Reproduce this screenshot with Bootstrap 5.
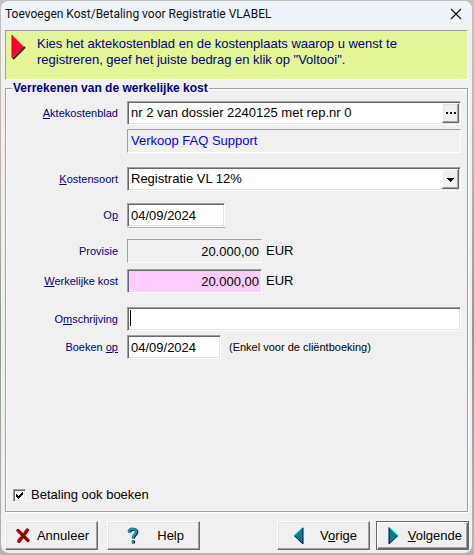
<!DOCTYPE html>
<html lang="nl">
<head>
<meta charset="utf-8">
<meta name="viewport" content="width=device-width, initial-scale=1">
<title>Toevoegen Kost/Betaling voor Registratie VLABEL</title>
<link rel="stylesheet" href="https://cdn.jsdelivr.net/npm/bootstrap@5.3.0/dist/css/bootstrap.min.css">
<style>
  body { background: linear-gradient(#c4c0bb, #b9b3ac 30%, #8f9a8c 60%, #b5b5b5); font-family: "Liberation Sans", Arial, sans-serif; font-size: 13px; line-height: 16px; color: #000; }
  .dialog { margin: 1px 2px 2px 1px; min-height: calc(100vh - 3px); background: #f0f0f0; border-radius: 8px; overflow: hidden; }
  .titlebar { height: 26px; background: #eef3f9; padding: 0 9px 0 4px; font: 12px/26px Roboto, "Open Sans", sans-serif; color: #111; }
  .close-btn { width: 14px; height: 14px; background: none; border: 0; }
  .banner { margin: 3px 4px 0; min-height: 50px; padding: 5px 8px 0 6px; background: #e3f596; border: 1px solid; border-color: #a0a0a0 #fff #fff #a0a0a0; color: #000080; }
  .banner svg { flex: none; margin: -2px 11px 0 -2px; }
  .group { margin: 1px 4px 0; padding: 6px 6px 4px; border: 1px solid #a0a0a0; box-shadow: 1px 1px #fff, inset 1px 1px #fff; min-width: 0; }
  .group legend { float: none; width: auto; margin: 0; padding: 0 1px; font-size: 12px; line-height: 14px; font-weight: bold; color: #000080; background: #f0f0f0; }
  .form-line { display: grid; grid-template-columns: 106px 1fr; column-gap: 9px; align-items: center; }
  .form-line > label { font-size: 11px; text-align: right; color: #000080; white-space: nowrap; }
  .gap-s { margin-top: 4px; }
  .gap-m { margin-top: 6px; }
  .gap-l { margin-top: 12px; }
  .gap-xl { margin-top: 14px; }
  .field { height: 24px; border: 1px solid; border-color: #a0a0a0 #fff #fff #a0a0a0; box-shadow: inset 1px 1px #696969, inset -1px -1px #e3e3e3; background: #fff; border-radius: 0; padding: 0 2px 0 3px; font-size: 13px; line-height: 22px; color: #000; outline: 0; min-width: 0; }
  .flat { background: #f0f0f0; box-shadow: none; }
  .note { color: #0000ff; }
  .date-op { width: 98px; box-shadow: inset 1px 1px #696969, inset -1px -1px #e3e3e3, 0 1px #00ffff; }
  .date-book { width: 94px; }
  .amount { width: 135px; text-align: right; }
  .pink { background: #ffccff; }
  .picker { padding: 1px; }
  .picker input { border: 0; outline: 0; padding: 0 0 0 2px; min-width: 0; background: transparent; }
  .raised { background: #f0f0f0; border: 1px solid; border-color: #fff #696969 #696969 #fff; box-shadow: inset -1px -1px #a0a0a0, inset 1px 1px #e3e3e3; border-radius: 0; color: #000; }
  .dots { width: 17px; padding: 0; display: flex; align-items: center; justify-content: center; }
  .combo { appearance: none; background: #fff url("data:image/svg+xml,%3Csvg xmlns='http://www.w3.org/2000/svg' width='17' height='20' shape-rendering='crispEdges'%3E%3Cpath fill='%23696969' d='M0 0h17v20H0z'/%3E%3Cpath fill='%23fff' d='M0 0h16v19H0z'/%3E%3Cpath fill='%23a0a0a0' d='M1 1h15v18H1z'/%3E%3Cpath fill='%23f0f0f0' d='M1 1h14v17H1z'/%3E%3Cpath d='M5 9h7v1H5zM6 10h5v1H6zM7 11h3v1H7zM8 12h1v1H8z'/%3E%3C/svg%3E") no-repeat right 1px top 1px; }
  .editing { background: #fff linear-gradient(#000, #000) no-repeat 2px 2px / 1px 16px; }
  .hint { font-size: 11px; }
  .spacer { min-height: 128px; }
  .check-line { padding-left: 1px; gap: 5px; }
  .tick { appearance: none; width: 13px; height: 13px; margin: 0; border: 1px solid; border-color: #a0a0a0 #fff #fff #a0a0a0; box-shadow: inset 1px 1px #696969, inset -1px -1px #e3e3e3; background: #fff; }
  .tick:checked { background: #fff url("data:image/svg+xml,%3Csvg xmlns='http://www.w3.org/2000/svg' width='11' height='11' shape-rendering='crispEdges'%3E%3Cpath d='M2 4h1v3H2zM3 5h1v3H3zM4 6h1v3H4zM5 5h1v3H5zM6 4h1v3H6zM7 3h1v3H7zM8 2h1v3H8z'/%3E%3C/svg%3E") no-repeat; }
  .actions { padding: 9px 3px 3px 4px; gap: 6px; }
  .action { width: 93px; height: 29px; padding: 0 8px 0 10px; display: flex; align-items: center; justify-content: space-between; }
  .action span { padding-top: 1px; }
  .action.wide { margin-left: 3px; padding: 0 15px 0 19px; }
  .action.prev { padding: 0 12px 0 16px; }
  .action.main { padding: 0 6px 0 11px; border: 1px solid #696969; box-shadow: inset 1px 1px #fff, inset -1px -1px #696969, inset -2px -2px #a0a0a0; }
</style>
<script src="https://cdn.jsdelivr.net/npm/bootstrap@5.3.0/dist/js/bootstrap.bundle.min.js"></script>
</head>
<body>
<main class="dialog d-flex flex-column">
  <header class="titlebar d-flex justify-content-between align-items-center">
    <span>Toevoegen Kost/Betaling voor Registratie VLABEL</span>
    <button type="button" class="close-btn p-0 d-flex align-items-center justify-content-center" aria-label="Sluiten">
      <svg width="12" height="12" viewBox="0 0 12 12"><path d="M1 1l10 10M11 1L1 11" stroke="#111" stroke-width="1.2"/></svg>
    </button>
  </header>

  <div class="banner d-flex align-items-start">
    <svg width="16" height="26" viewBox="0 0 16 26"><path d="M3 25L15 13" stroke="#222" stroke-width="2"/><path d="M2 1l12 12L2 24z" fill="#ff0030"/><path d="M2 24V1" stroke="#e00000"/></svg>
    <div>Kies het aktekostenblad en de kostenplaats waarop u wenst te<br>registreren, geef het juiste bedrag en klik op "Voltooi".</div>
  </div>

  <form class="d-flex flex-column flex-grow-1">
    <fieldset class="group flex-grow-1">
      <legend>Verrekenen van de werkelijke kost</legend>
      <div class="form-line">
        <label for="sheet"><u>A</u>ktekostenblad</label>
        <div class="field picker d-flex">
          <input id="sheet" class="flex-grow-1" value="nr 2 van dossier 2240125 met rep.nr 0">
          <button type="button" class="raised dots" aria-label="Kiezen"><svg width="10" height="2" viewBox="0 0 10 2" shape-rendering="crispEdges"><path d="M0 0h2v2H0zM4 0h2v2H4zM8 0h2v2H8z"/></svg></button>
        </div>
      </div>
      <div class="form-line gap-s">
        <span></span>
        <output class="field flat note">Verkoop FAQ Support</output>
      </div>
      <div class="form-line gap-xl">
        <label for="kind"><u>K</u>ostensoort</label>
        <select id="kind" class="field combo"><option>Registratie VL 12%</option></select>
      </div>
      <div class="form-line gap-l">
        <label for="date">O<u>p</u></label>
        <input id="date" class="field date-op" value="04/09/2024">
      </div>
      <div class="form-line gap-l">
        <label for="prov">Provisie</label>
        <div class="d-flex align-items-center gap-1"><input id="prov" class="field flat amount" value="20.000,00" readonly><span>EUR</span></div>
      </div>
      <div class="form-line gap-m">
        <label for="real"><u>W</u>erkelijke kost</label>
        <div class="d-flex align-items-center gap-1"><input id="real" class="field pink amount" value="20.000,00"><span>EUR</span></div>
      </div>
      <div class="form-line gap-xl">
        <label for="desc">O<u>m</u>schrijving</label>
        <input id="desc" class="field editing">
      </div>
      <div class="form-line gap-s">
        <label for="book">Boeken <u>op</u></label>
        <div class="d-flex align-items-center gap-2"><input id="book" class="field date-book" value="04/09/2024"><span class="hint">(Enkel voor de cliëntboeking)</span></div>
      </div>
      <div class="spacer"></div>
      <div class="check-line d-flex align-items-center">
        <input type="checkbox" class="tick" id="pay" checked>
        <label for="pay">Betaling ook boeken</label>
      </div>
    </fieldset>

    <div class="actions d-flex">
      <button type="button" class="raised action">
        <svg width="14" height="15" viewBox="0 0 14 15"><path d="M2 2.500L12 12.500M11.500 2L3 13.500" stroke="#8b0000" stroke-width="3.2" stroke-linecap="round"/><path d="M1 2l4 4M11 1l-3 4M1.500 13l3-4" stroke="#d80000" stroke-width="1.500"/></svg>
        <span>Annuleer</span>
      </button>
      <button type="button" class="raised action wide">
        <svg width="12" height="17" viewBox="0 0 12 17"><g fill="none" stroke="#000080" stroke-width="3"><path d="M2.500 5.500C2.500 1.500 10 1.500 10 5C10 8 6.500 7.500 6.500 11.500"/><path d="M5 15h3"/></g><g fill="none" stroke="#00a0a0" stroke-width="2.500"><path d="M1.800 5C1.800 0.800 9.200 0.800 9.200 4.500C9.200 7.500 5.800 7 5.800 11"/><path d="M4.500 14.500h2.500"/></g></svg>
        <span>Help</span>
      </button>
      <button type="button" class="raised action prev ms-auto">
        <svg width="10" height="17" viewBox="0 0 10 17"><path d="M9 0v17L0 8.500z" fill="#008080"/><path d="M9 1v16M0 8.500L9 17" stroke="#000080"/><path d="M0 8.500L9 0" stroke="#00ffff"/></svg>
        <span>V<u>o</u>rige</span>
      </button>
      <button type="submit" class="raised action main">
        <svg width="10" height="17" viewBox="0 0 10 17"><path d="M1 0v17l9-8.500z" fill="#008080"/><path d="M1 0v17l9-8.500" fill="none" stroke="#000080"/><path d="M1 0l9 8.500" stroke="#00ffff"/></svg>
        <span><u>V</u>olgende</span>
      </button>
    </div>
  </form>
</main>
</body>
</html>
